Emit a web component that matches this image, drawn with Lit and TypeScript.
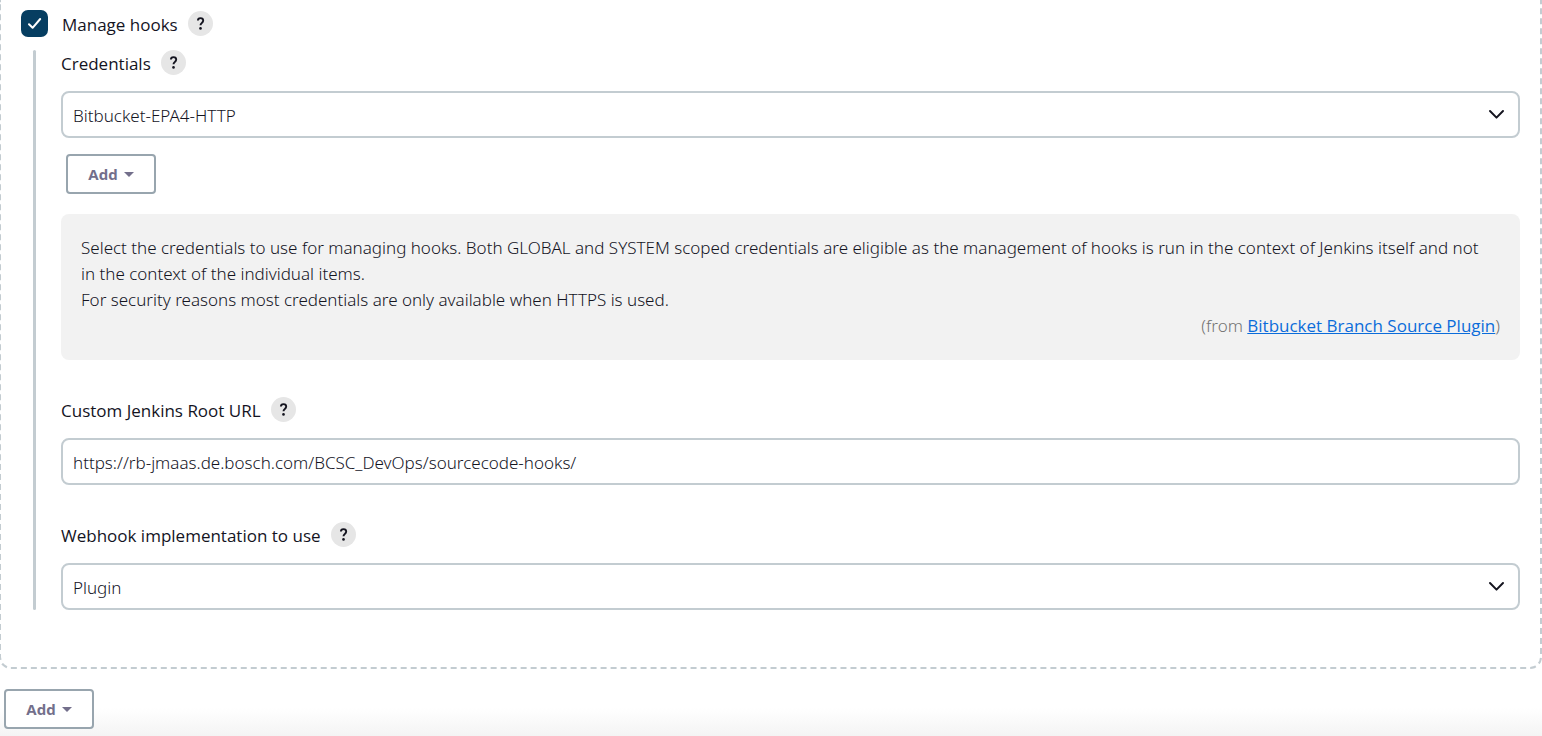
import { LitElement, html, css } from "lit";
import { customElement, property, state } from "lit/decorators.js";

@customElement("help-button")
class HelpButton extends LitElement {
  @property() topic = "";

  static styles = css`
    :host {
      display: flex;
    }
    .help {
      display: grid;
      place-items: center;
      width: 25px;
      height: 25px;
      padding: 0;
      border: 0;
      border-radius: 50%;
      background: #e6e6e6;
      color: #14141f;
      cursor: pointer;
    }
    .mark {
      width: 9px;
      height: 13px;
    }
  `;

  render() {
    return html`
      <button class="help" type="button" aria-label="Help for feature: ${this.topic}">
        <svg class="mark" viewBox="0 0 9 13" fill="none" aria-hidden="true">
          <path
            d="M1.9 3.6C1.9 1.9 2.9 1.1 4.5 1.1C6.1 1.1 7.2 2 7.2 3.6C7.2 4.7 6.6 5.3 5.8 5.9C4.9 6.6 4.5 7 4.5 8.3"
            stroke="currentColor"
            stroke-width="1.9"
          />
          <circle cx="4.5" cy="11.4" r="1.3" fill="currentColor" />
        </svg>
      </button>
    `;
  }
}

@customElement("menu-button")
class MenuButton extends LitElement {
  @property() label = "";

  static styles = css`
    :host {
      display: flex;
    }
    .button {
      display: flex;
      align-items: center;
      justify-content: center;
      gap: 6px;
      min-width: 90px;
      height: 40px;
      padding: 0 20px;
      border: 2px solid #98a5ae;
      border-radius: 4px;
      background: #fff;
      color: #736f8b;
      font: 700 15px/20px "Open Sans", "Noto Sans", sans-serif;
      cursor: pointer;
    }
    .caret {
      width: 10px;
      height: 5px;
    }
  `;

  render() {
    return html`
      <button class="button" type="button" aria-haspopup="menu">
        ${this.label}
        <svg class="caret" viewBox="0 0 10 5" aria-hidden="true">
          <path d="M0 0H10L5 5Z" fill="currentColor" />
        </svg>
      </button>
    `;
  }
}

@customElement("app-root")
class AppRoot extends LitElement {
  @state() private manageHooks = true;

  static styles = css`
    :host {
      display: flex;
      flex-direction: column;
      min-height: 100vh;
      overflow-x: hidden;
      background: #fff;
      color: #14141f;
      font: 300 17px/26px "Noto Sans", "Open Sans", sans-serif;
    }
    *,
    *::before {
      box-sizing: border-box;
    }
    .panel {
      margin-left: -1px;
      padding: 10px 20px 57px;
      border: 2px dashed #c3ccd1;
      border-top: 0;
      border-radius: 0 0 12px 12px;
    }
    .row {
      display: flex;
      align-items: center;
      gap: 10px;
      height: 25px;
    }
    .toggle {
      height: 27px;
      margin-bottom: 13px;
    }
    .check {
      display: grid;
    }
    .check > * {
      grid-area: 1 / 1;
    }
    .box {
      appearance: none;
      width: 27px;
      height: 27px;
      margin: 0 4px 0 0;
      border: 2px solid #063e61;
      border-radius: 7px;
    }
    .box:checked {
      background: #063e61;
    }
    .tick {
      width: 27px;
      height: 27px;
      pointer-events: none;
    }
    .label,
    .link {
      font-family: "Open Sans", "Noto Sans", sans-serif;
      font-weight: 500;
    }
    .label {
      padding-top: 2px;
    }
    .nested {
      display: grid;
      grid-template-columns: 3px minmax(0, 1fr);
      column-gap: 25px;
      margin-left: 12px;
    }
    .nested::before {
      content: "";
      border-radius: 2px;
      background: #c3ccd1;
    }
    .fields {
      display: flex;
      flex-direction: column;
      gap: 37px;
    }
    .field {
      display: flex;
      flex-direction: column;
      gap: 16px;
    }
    .control {
      width: 100%;
      height: 47px;
      padding: 2px 10px 0;
      border: 2px solid #c3ccd1;
      border-radius: 8px;
      background: #fff;
      color: inherit;
      font: inherit;
    }
    .select {
      display: grid;
      align-items: center;
    }
    .select > * {
      grid-area: 1 / 1;
    }
    .select .control {
      appearance: none;
    }
    .chevron {
      justify-self: end;
      width: 17px;
      height: 11px;
      margin-right: 15px;
      pointer-events: none;
    }
    .add {
      align-self: flex-start;
      margin-left: 5px;
    }
    .help-text {
      margin-top: 4px;
      padding: 21px 20px;
      border-radius: 8px;
      background: #f2f2f2;
    }
    .help-text p {
      margin: 0;
      padding-right: 8px;
    }
    .help-text .source {
      padding-right: 0;
      color: #737373;
      text-align: right;
    }
    .link {
      color: #0b6cda;
    }
    .footer {
      display: flex;
      flex: 1;
      align-items: flex-start;
      padding: 20px 4px 7px;
      background: linear-gradient(to top, #f4f4f4, #fff 28px);
    }
  `;

  private chevron() {
    return html`
      <svg class="chevron" viewBox="0 0 17 11" fill="none" aria-hidden="true">
        <path
          d="M2 2L8.5 8.6L15 2"
          stroke="currentColor"
          stroke-width="2"
          stroke-linecap="round"
          stroke-linejoin="round"
        />
      </svg>
    `;
  }

  private onToggle(e: Event) {
    this.manageHooks = (e.target as HTMLInputElement).checked;
  }

  render() {
    return html`
      <section class="panel">
        <div class="row toggle">
          <span class="check">
            <input
              class="box"
              id="manage"
              type="checkbox"
              .checked=${this.manageHooks}
              @change=${this.onToggle}
            />
            <svg class="tick" viewBox="0 0 27 27" fill="none" aria-hidden="true">
              <path
                d="M8 14.3L11.6 17.8L19.2 9"
                stroke="#fff"
                stroke-width="2"
                stroke-linecap="round"
                stroke-linejoin="round"
              />
            </svg>
          </span>
          <label class="label" for="manage">Manage hooks</label>
          <help-button topic="Manage hooks"></help-button>
        </div>
        <div class="nested">
          <div class="fields">
            <div class="field">
              <div class="row">
                <label class="label" for="credentials">Credentials</label>
                <help-button topic="Credentials"></help-button>
              </div>
              <div class="select">
                <select class="control" id="credentials">
                  <option>Bitbucket-EPA4-HTTP</option>
                </select>
                ${this.chevron()}
              </div>
              <menu-button class="add" label="Add"></menu-button>
              <div class="help-text">
                <p>
                  Select the credentials to use for managing hooks. Both GLOBAL and SYSTEM scoped
                  credentials are eligible as the management of hooks is run in the context of
                  Jenkins itself and not in the context of the individual items.
                </p>
                <p>For security reasons most credentials are only available when HTTPS is used.</p>
                <p class="source">
                  (from <a class="link" href="#plugin">Bitbucket Branch Source Plugin</a>)
                </p>
              </div>
            </div>
            <div class="field">
              <div class="row">
                <label class="label" for="root-url">Custom Jenkins Root URL</label>
                <help-button topic="Custom Jenkins Root URL"></help-button>
              </div>
              <input
                class="control"
                id="root-url"
                type="text"
                value="https://rb-jmaas.de.bosch.com/BCSC_DevOps/sourcecode-hooks/"
              />
            </div>
            <div class="field">
              <div class="row">
                <label class="label" for="webhook">Webhook implementation to use</label>
                <help-button topic="Webhook implementation to use"></help-button>
              </div>
              <div class="select">
                <select class="control" id="webhook">
                  <option>Plugin</option>
                </select>
                ${this.chevron()}
              </div>
            </div>
          </div>
        </div>
      </section>
      <div class="footer">
        <menu-button label="Add"></menu-button>
      </div>
    `;
  }
}
